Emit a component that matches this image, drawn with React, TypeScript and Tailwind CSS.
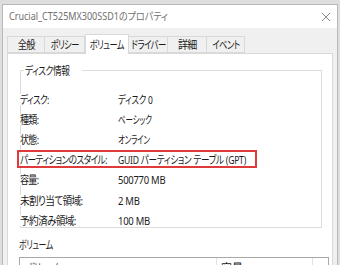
const font = "font-['Noto_Sans','Noto_Sans_CJK_JP',sans-serif] [font-feature-settings:'palt']";

const tabs = [
  { label: "全般", w: "w-[38px]", s: "scale-x-[0.84]" },
  { label: "ポリシー", w: "w-[41px]", s: "scale-x-[0.745]" },
  { label: "ボリューム", w: "w-[44px]", s: "scale-x-[0.745]", active: true },
  { label: "ドライバー", w: "w-[40px]", s: "scale-x-[0.765]" },
  { label: "詳細", w: "w-[40px]", s: "scale-x-[0.91]" },
  { label: "イベント", w: "w-[39px]", s: "scale-x-[0.765]" },
];

// Yu Gothic UI has much narrower kana than Noto CJK, so texts get squeezed a bit
const rows = [
  { label: "ディスク:", ls: "scale-x-[0.78]", value: "ディスク 0", vs: "scale-x-[0.765]" },
  { label: "種類:", ls: "scale-x-[0.82]", value: "ベーシック", vs: "scale-x-[0.69]" },
  { label: "状態:", ls: "scale-x-[0.82]", value: "オンライン", vs: "scale-x-[0.67]" },
  {
    label: "パーティションのスタイル:",
    ls: "scale-x-[0.79]",
    value: "GUID パーティション テーブル (GPT)",
    vs: "scale-x-[0.78]",
    marked: true,
  },
  { label: "容量:", ls: "scale-x-[0.82]", value: "500770 MB", vs: "scale-x-[0.86]" },
  { label: "未割り当て領域:", ls: "scale-x-[0.88]", value: "2 MB", vs: "scale-x-[0.86]" },
  { label: "予約済み領域:", ls: "scale-x-[0.88]", value: "100 MB", vs: "scale-x-[0.86]" },
];

type RowProps = { label: string; ls: string; value: string; vs: string; marked?: boolean };

function Row({ label, ls, value, vs, marked }: RowProps) {
  return (
    <div className="relative flex items-center h-[20.2px]">
      <div className="w-[98px] shrink-0 h-[16px] -ml-[1px] flex items-center whitespace-nowrap">
        <span className={`inline-block bg-white tracking-[-0.8px] origin-left ${ls}`}>{label}</span>
      </div>
      <div className="whitespace-nowrap">
        <span className={`inline-block tracking-[-0.3px] origin-left ${vs}`}>{value}</span>
      </div>
      {marked && (
        <div className="absolute left-[-4px] top-[0px] w-[240px] h-[18px] border-2 border-[#e03b3b]" />
      )}
    </div>
  );
}

export default function App() {
  return (
    <div className={`w-[340px] h-[265px] overflow-hidden bg-[#dedede] pt-[4px] pl-[2px] text-[11px] leading-none text-[#1b1b1b] ${font}`}>
      <div className="w-[336px] h-[270px] border border-[#b8b8b8] bg-[#f0f0f0]">
        <div className="h-[23px] bg-white flex items-center justify-between pl-[6px] pr-[5px]">
          <span className="inline-block text-[#6f6f6f] text-[10.5px] whitespace-nowrap origin-left scale-x-[0.86]">
            Crucial_CT525MX300SSD1のプロパティ
          </span>
          <svg width="10" height="10" viewBox="0 0 10 10" className="mr-[1px]">
            <path d="M1 1 L9 9 M9 1 L1 9" stroke="#8a8a8a" strokeWidth="1" />
          </svg>
        </div>
        <div className="pl-[4px] pt-[5px]">
          <div className="flex items-end h-[20px]">
            {tabs.map((t) =>
              t.active ? (
                <div
                  key={t.label}
                  className={`${t.w} h-[20px] -mb-[1px] bg-white border border-b-0 border-[#d9d9d9] flex items-center justify-center relative z-10 whitespace-nowrap`}
                >
                  <span className={`inline-block tracking-[-0.8px] ${t.s}`}>{t.label}</span>
                </div>
              ) : (
                <div
                  key={t.label}
                  className={`${t.w} h-[17px] bg-[#f0f0f0] border border-[#d9d9d9] -ml-[1px] first:ml-0 flex items-center justify-center whitespace-nowrap`}
                >
                  <span className={`inline-block tracking-[-0.8px] ${t.s}`}>{t.label}</span>
                </div>
              )
            )}
          </div>
          <div className="w-[326px] h-[230px] bg-white border border-[#d9d9d9] pl-[12px] pt-[16px]">
            <div className="relative w-[302px] h-[158px] border border-[#dcdcdc]">
              <div className="absolute left-[3px] -top-[7px] bg-white px-[1px] h-[13px] flex items-center whitespace-nowrap">
                <span className="inline-block tracking-[-0.6px] origin-left scale-x-[0.79]">ディスク情報</span>
              </div>
              <div className="pt-[18px]">
                {rows.map((r) => (
                  <Row key={r.label} {...r} />
                ))}
              </div>
            </div>
            <div className="mt-[9px] ml-[-1px] h-[14px] flex items-center whitespace-nowrap">
              <span className="inline-block tracking-[-0.6px] origin-left scale-x-[0.725]">ボリューム</span>
            </div>
            <div className="mt-[6px] ml-[-1px] w-[310px] h-[40px] border border-[#a8a8a8] flex">
              <div className="w-[197px] border-r border-[#e2e2e2] pl-[7px] pt-[4px] whitespace-nowrap">
                <span className="inline-block tracking-[-0.6px] origin-left scale-x-[0.725]">ボリューム</span>
              </div>
              <div className="w-[96px] border-r border-[#e2e2e2] pl-[4px] pt-[4px]">容量</div>
            </div>
          </div>
        </div>
      </div>
    </div>
  );
}
